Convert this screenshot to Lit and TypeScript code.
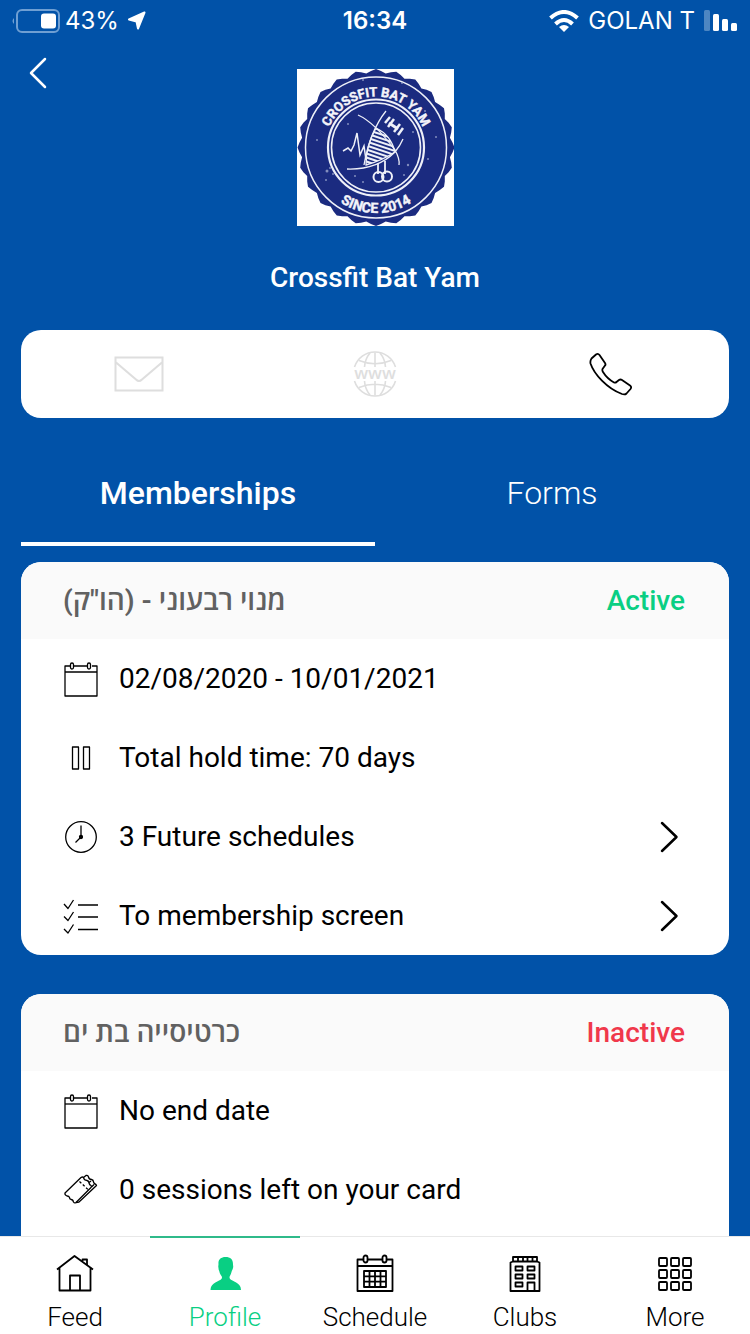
import { LitElement, html, svg, css } from "lit";
import { customElement, property, state } from "lit/decorators.js";
import { classMap } from "lit/directives/class-map.js";

const calendarFrame = svg`
  <path d="M7 5H2V35H34V5H29M11 5H24" />
  <path d="M2 11H34" />
  <rect x="7.5" y="2" width="3" height="6" rx="1.5" />
  <rect x="24.5" y="2" width="3" height="6" rx="1.5" />`;

const icons: Record<string, unknown> = {
  calendar: calendarFrame,
  pause: svg`
    <rect x="9.5" y="7" width="6" height="22" />
    <rect x="20.5" y="7" width="6" height="22" />`,
  clock: svg`
    <circle cx="18" cy="18" r="15.3" />
    <path d="M18 6.500V18L12.500 23.500" />
    <circle cx="18" cy="18" r="1.500" fill="currentColor" />`,
  checklist: svg`
    <path d="M1 6L5 10.500L10.500 2M1 18.500L5 22.500L10.500 14M1 31L5 35L10.500 26.500" />
    <path d="M15 7H35M15 19H35M15 31.500H35" />`,
  ticket: svg`
    <path d="M2 21L18 5.500Q19.500 4.500 20.500 5.500Q21 8.500 24 8.500Q26 9 26 11Q26.500 13 28 13.500Q29 14.500 28 15.500L13 30.500Q11.500 31.500 10.500 30Q10 27.500 8 27.500Q6.500 27 6.500 25.500Q6 24 4 24Q1.500 23 2 21Z" />
    <path d="M20.500 5.500L23 3.500Q25 3 25.500 5Q26 7.500 28.500 7.500Q30.500 8 30.500 10Q31 12 33 12.500L33.500 13.500L16 30L13 30.500" />
    <path d="M26 10.500L28 9M28.500 15L31 12.500" />
    <path d="M16.500 9.500L25 17.500" stroke-dasharray="2.500 2" />`,
  home: svg`
    <path d="M1 15.500L18.500 2L37 15.500M3.500 14V36.500H34.500V14" />
    <path d="M14 36.500V21.500H24V36.500" />
    <path d="M26.500 7V5.500H31V11" />`,
  person: svg`
    <path fill="currentColor" stroke="none" d="M19.500 3C24.500 3 27 5.500 27 10C27 12 27.500 12 27 14C26.500 16 26 16 25.500 18C25 21 23.500 21.500 23.500 23.500C23.500 27 32.500 27.500 34.500 33Q35 35.500 35 36H4.500Q4.500 35 5 33C7 27.500 16 27 16 23.500C16 21.500 14 21 13.500 18C13 16 12.500 16 12.500 14C12 12 12.500 12 12.500 10C12 5.500 15 3 19.500 3Z" />`,
  schedule: svg`
    <path d="M7 5.500H1.500V37H36.500V5.500H31M12 5.500H26M1.500 12H36.500" />
    <rect x="7.500" y="1.500" width="4" height="7" rx="2" />
    <rect x="26.500" y="1.500" width="4" height="7" rx="2" />
    <path d="M8 17H30V33H8ZM8 22.300H30M8 27.700H30M13.500 17V33M19 17V33M24.500 17V33" />`,
  building: svg`
    <path d="M4.500 37V8.500L7 7.500V3H31V7.500L33.500 8.500V37ZM7 7.500H31M12 3V7.500M17 3V7.500M21.500 3V7.500M26.500 3V7.500" />
    <path d="M9.500 12.500H16.500V16.500H9.500ZM21.500 12.500H28.500V16.500H21.500ZM9.500 20.500H16.500V24.500H9.500ZM21.500 20.500H28.500V24.500H21.500ZM9.500 28.500H16.500V32.500H9.500ZM21.500 37V28.500H28.500V37" />`,
  grid: svg`${[4, 16, 28].map((y) =>
    [3, 15, 27].map((x) => svg`<rect x=${x} y=${y} width="8" height="8" rx="1" />`),
  )}`,
};

/* Toothed outline of the round club badge. */
const badgeOutline = Array.from({ length: 96 }, (_, i) => {
  const angle = (i / 96) * Math.PI * 2;
  const radius = 76 + 2.5 * Math.abs(Math.cos(angle * 12)) - 1.5 * Math.abs(Math.sin(angle * 12));
  return `${(79 + radius * Math.sin(angle)).toFixed(1)},${(78.5 - radius * Math.cos(angle)).toFixed(1)}`;
}).join(" ");

@customElement("line-icon")
class LineIcon extends LitElement {
  @property() name = "";
  @property({ type: Number }) box = 36;

  static styles = css`
    :host { display: block; flex: none; }
    svg { display: block; }
  `;

  render() {
    return html`<svg width=${this.box} height=${this.box} viewBox="0 0 ${this.box} ${this.box}"
      fill="none" stroke="currentColor" stroke-width=${this.box > 36 ? 1.8 : 1.3}
      stroke-linejoin="round" aria-hidden="true">${icons[this.name]}</svg>`;
  }
}

@customElement("status-bar")
class StatusBar extends LitElement {
  static styles = css`
    :host {
      display: grid;
      grid-template-columns: 1fr auto 1fr;
      align-items: center;
      height: 40px;
      padding: 0 12px;
      color: #fff;
      font: 400 24px/42px Inter, "Liberation Sans", sans-serif;
    }
    .side { display: flex; align-items: center; gap: 5px; }
    .right { justify-content: flex-end; gap: 9px; }
    .arrow { margin-left: 3px; }
    .time { font-weight: 600; }
    svg { display: block; }
  `;

  render() {
    return html`
      <div class="side">
        <svg width="48" height="24" viewBox="0 0 48 24" aria-label="Battery">
          <path d="M2 9Q-1 12 2 15Z" fill="#6f9fd3" />
          <rect x="5" y="1" width="42" height="22" rx="5" fill="none" stroke="#6f9fd3" stroke-width="2" />
          <rect x="29" y="4.500" width="15" height="15" rx="3" fill="#fff" />
        </svg>
        <span>43%</span>
        <svg class="arrow" width="20" height="20" viewBox="0 0 20 20" aria-hidden="true">
          <path d="M17.500 1.500L2 8.500L9.500 10.500L11 17.500Z" fill="#fff" stroke="#fff" stroke-width="2" stroke-linejoin="round" />
        </svg>
      </div>
      <span class="time">16:34</span>
      <div class="side right">
        <svg width="30" height="22" viewBox="0 0 30 22" fill="none" stroke="#fff" stroke-width="4" aria-hidden="true">
          <path d="M1.500 8Q15 -4 28.500 8M6.500 14Q15 6 23.500 14" />
          <path d="M15 22L10 17Q15 13 20 17Z" fill="#fff" stroke="none" />
        </svg>
        <span>GOLAN T</span>
        <svg width="34" height="22" viewBox="0 0 34 22" fill="#fff" aria-hidden="true">
          <rect x="0" y="0" width="6" height="21" rx="1.500" opacity=".3" />
          <rect x="9" y="4" width="6" height="17" rx="1.500" />
          <rect x="18" y="9" width="6" height="12" rx="1.500" />
          <rect x="27" y="13" width="6" height="8" rx="1.500" />
        </svg>
      </div>`;
  }
}

@customElement("club-logo")
class ClubLogo extends LitElement {
  static styles = css`
    :host { display: block; }
    svg { display: block; }
    .lettering { font: 700 13px Roboto, sans-serif; fill: #f3f4fa; stroke: #f3f4fa; stroke-width: 0.4px; }
    .year { font-size: 14px; }
  `;

  render() {
    return html`
      <svg width="157" height="157" viewBox="0 0 157 157" role="img" aria-label="Crossfit Bat Yam">
        <defs>
          <path id="top" d="M28 78.500A51 51 0 0 1 130 78.500" />
          <path id="bottom" d="M13.500 78.500A65.500 65.500 0 0 0 144.500 78.500" />
          <clipPath id="torso"><path d="M79 59Q94 66 98 83Q84 92 69 96Q69 76 79 59Z" /></clipPath>
        </defs>
        <rect width="157" height="157" fill="#fff" />
        <polygon points=${badgeOutline} fill="#1b2b80" />
        <g fill="none" stroke="#eef0f8">
          <circle cx="79" cy="78.500" r="70.500" stroke-width="1.500" />
          <circle cx="79" cy="78.500" r="48" stroke-width="2.200" />
          <circle cx="79" cy="78.500" r="44.500" stroke-width="1.600" />
          <path d="M46 82L51 79L54 82L57 76L60 64L63 86L67 77L69 91" stroke-width="1.500" />
          <path d="M61 46Q77 53 98 81Q103 90 102 96M89 42Q73 62 67 96M50 100Q80 101 98 83Q103 77 106 70" stroke-width="1.300" />
          <path d="M81 94V105M88 92V105" stroke-width="1.800" />
          <circle cx="81.500" cy="108" r="5" stroke-width="2" />
          <circle cx="90" cy="107.500" r="5" stroke-width="2" />
          <g clip-path="url(#torso)" stroke-width="2">
            ${[0, 1, 2, 3, 4, 5, 6, 7, 8, 9, 10, 11].map(
              (i) => svg`<path d="M62 ${50 + i * 4}L104 ${64 + i * 4}" />`,
            )}
          </g>
          <path d="M79 59Q94 66 98 83Q84 92 69 96Q69 76 79 59Z" stroke-width="1.300" />
          <path d="M92 54L101 60" stroke-width="3" />
          <path d="M88 54L93 48M91 58L97 50M97 63L103 55M101 66L106 59" stroke-width="2.500" />
        </g>
        <g fill="#aeb7d8" opacity=".7">
          <circle cx="30" cy="102" r="1.500" /><circle cx="33" cy="99" r="1" />
          <circle cx="36" cy="105" r="1" /><circle cx="29" cy="111" r="1" />
          <circle cx="111" cy="96" r="1.200" /><circle cx="107" cy="106" r="1" />
          <circle cx="58" cy="107" r="1" /><circle cx="116" cy="63" r="1" />
          <circle cx="128" cy="42" r="1" /><circle cx="131" cy="90" r="1" />
          <circle cx="20" cy="71" r="1" /><circle cx="51" cy="55" r="1" />
          <circle cx="66" cy="113" r="1" /><circle cx="139" cy="68" r="1" />
          <circle cx="66" cy="11" r="1" /><circle cx="105" cy="14" r="1" />
        </g>
        <text class="lettering" text-anchor="middle">
          <textPath href="#top" startOffset="50%">CROSSFIT BAT YAM</textPath>
        </text>
        <text class="lettering year" text-anchor="middle">
          <textPath href="#bottom" startOffset="50%">SINCE 2014</textPath>
        </text>
      </svg>`;
  }
}

interface Row { icon: string; text: string; link?: boolean }
interface Membership { name: string; status: string; active: boolean; rows: Row[] }

@customElement("membership-card")
class MembershipCard extends LitElement {
  @property({ attribute: false }) data!: Membership;

  static styles = css`
    :host { display: block; background: #fff; border-radius: 20px; overflow: hidden; }
    .head {
      display: flex;
      align-items: center;
      justify-content: space-between;
      height: 77px;
      padding: 0 44px 0 42px;
      background: #fafafa;
    }
    .name {
      margin: 0;
      color: #616161;
      font: 600 28px/36px Roboto, "Open Sans", "Liberation Sans", sans-serif;
    }
    .status { color: #f0384b; font-weight: 500; }
    .active { color: #09cf83; }
    .rows { margin: 0; padding: 0; list-style: none; }
    .row {
      box-sizing: border-box;
      display: flex;
      align-items: center;
      gap: 20px;
      width: 100%;
      height: 79px;
      padding: 0 44px 0 42px;
      border: 0;
      background: none;
      color: #000;
      font: inherit;
      text-align: left;
    }
    .text { flex: 1; }
    .chevron { display: block; }
  `;

  render() {
    const { name, status, active, rows } = this.data;
    return html`
      <div class="head">
        <h2 class="name" dir="rtl" lang="he">${name}</h2>
        <span class=${classMap({ status: true, active })}>${status}</span>
      </div>
      <ul class="rows">
        ${rows.map((row) => {
          const body = html`<line-icon name=${row.icon}></line-icon><span class="text">${row.text}</span>`;
          return html`<li>${row.link
            ? html`<button class="row" type="button">${body}
                <svg class="chevron" width="32" height="32" viewBox="0 0 32 32" fill="none" stroke="#000"
                  stroke-width="2.500" stroke-linecap="round" stroke-linejoin="round" aria-hidden="true">
                  <path d="M9 2L23.500 16L9 30" />
                </svg></button>`
            : html`<div class="row">${body}</div>`}</li>`;
        })}
      </ul>`;
  }
}

@customElement("app-root")
class AppRoot extends LitElement {
  @state() private tab = "Memberships";

  private memberships: Membership[] = [
    {
      name: 'מנוי רבעוני - (הו"ק)',
      status: "Active",
      active: true,
      rows: [
        { icon: "calendar", text: "02/08/2020 - 10/01/2021" },
        { icon: "pause", text: "Total hold time: 70 days" },
        { icon: "clock", text: "3 Future schedules", link: true },
        { icon: "checklist", text: "To membership screen", link: true },
      ],
    },
    {
      name: "כרטיסייה בת ים",
      status: "Inactive",
      active: false,
      rows: [
        { icon: "calendar", text: "No end date" },
        { icon: "ticket", text: "0 sessions left on your card" },
      ],
    },
  ];

  private pages = [
    { icon: "home", label: "Feed" },
    { icon: "person", label: "Profile" },
    { icon: "schedule", label: "Schedule" },
    { icon: "building", label: "Clubs" },
    { icon: "grid", label: "More" },
  ];

  static styles = css`
    :host {
      display: flex;
      flex-direction: column;
      height: 100vh;
      overflow: hidden;
      background: #0152a8;
      font: 400 28px/36px Roboto, "Liberation Sans", sans-serif;
    }
    svg { display: block; }
    button { border: 0; background: none; font: inherit; }
    .main { flex: 1; min-height: 0; overflow: hidden; padding: 0 21px; }
    .top { display: grid; grid-template-columns: 1fr auto 1fr; align-items: start; padding-top: 17px; }
    .back { justify-self: start; padding: 0; }
    .logo { margin-top: 12px; }
    .club { margin: 34px 0; color: #fff; font-size: 28px; font-weight: 500; line-height: 36px; text-align: center; }
    .contact {
      display: grid;
      grid-template-columns: repeat(3, 1fr);
      height: 88px;
      background: #fff;
      border-radius: 20px;
    }
    .way { display: grid; place-items: center; padding: 0; color: #dedede; }
    .www { font: 600 17px "Open Sans", sans-serif; fill: currentColor; stroke: none; }
    .ready { color: #000; }
    .tabs { display: grid; grid-template-columns: 1fr 1fr; margin: 22px 0 16px; }
    .tab { height: 106px; padding: 0; color: #fff; font-size: 32px; font-weight: 300; line-height: 40px; }
    .chosen { font-weight: 500; box-shadow: inset 0 -4px #fff; }
    .cards { display: grid; gap: 39px; }
    .card:last-child { padding-bottom: 40px; }
    .nav {
      display: grid;
      grid-template-columns: repeat(5, 1fr);
      flex: none;
      background: #fff;
      box-shadow: inset 0 1px #e8e8e8;
    }
    .page {
      display: flex;
      flex-direction: column;
      align-items: center;
      gap: 8px;
      height: 80px;
      padding-top: 18px;
      color: #000;
      font-size: 26px;
      font-weight: 300;
      line-height: 34px;
      text-decoration: none;
    }
    .current { color: #09cf83; box-shadow: inset 0 2px #2fba8a; }
  `;

  render() {
    return html`
      <status-bar></status-bar>
      <main class="main">
        <header class="top">
          <button class="back" type="button" aria-label="Back">
            <svg width="32" height="32" viewBox="0 0 32 32" fill="none" stroke="#fff" stroke-width="2.500"
              stroke-linecap="round" stroke-linejoin="round">
              <path d="M24 2L10 16L24 30" />
            </svg>
          </button>
          <club-logo class="logo"></club-logo>
        </header>
        <h1 class="club">Crossfit Bat Yam</h1>
        <div class="contact">
          <button class="way" type="button" aria-label="Email">
            <svg width="50" height="36" viewBox="0 0 50 36" fill="none" stroke="currentColor" stroke-width="2">
              <path d="M1.500 1.500H48.500V34.500H1.500ZM1.500 6L22 23.500Q25 26.500 28 23.500L48.500 6" />
            </svg>
          </button>
          <button class="way" type="button" aria-label="Website">
            <svg width="44" height="46" viewBox="0 0 44 46" fill="none" stroke="currentColor" stroke-width="1.600">
              <path d="M1.500 16A21.500 21.500 0 0 1 42.500 16M1.500 30A21.500 21.500 0 0 0 42.500 30" />
              <path d="M22 1.500V16M22 30V44.500M6 9.500Q22 16 38 9.500M6 36.500Q22 30 38 36.500" />
              <path d="M17 2Q12 8 11.500 16M27 2Q32 8 32.500 16M17 44Q12 38 11.500 30M27 44Q32 38 32.500 30" />
              <text class="www" x="22" y="28" text-anchor="middle">www</text>
            </svg>
          </button>
          <button class="way ready" type="button" aria-label="Call">
            <svg width="44" height="44" viewBox="0 0 44 44" fill="none" stroke="currentColor" stroke-width="1.800"
              stroke-linejoin="round">
              <path d="M7 2.500Q9 1 10.500 3L16 11Q17 12.500 16 13.500L13.500 17Q13 18.500 14 20Q18 26.500 25 30.500Q26.500 31 27.500 30L30 28Q31.500 27 33 28L41 33.500Q43 35 41.500 37L37.500 41.500Q36 43 33 42C18 36.500 5 22 1.500 11.500Q1 8.500 2.500 6.500Z" />
            </svg>
          </button>
        </div>
        <div class="tabs" role="tablist">
          ${["Memberships", "Forms"].map(
            (name) => html`<button type="button" role="tab" aria-selected=${this.tab === name}
              class=${classMap({ tab: true, chosen: this.tab === name })}
              @click=${() => (this.tab = name)}>${name}</button>`,
          )}
        </div>
        <section class="cards">
          ${this.memberships.map((m) => html`<membership-card class="card" .data=${m}></membership-card>`)}
        </section>
      </main>
      <nav class="nav">
        ${this.pages.map(
          (page) => html`<a href="#${page.label}" class=${classMap({ page: true, current: page.label === "Profile" })}>
            <line-icon name=${page.icon} .box=${38}></line-icon>${page.label}
          </a>`,
        )}
      </nav>`;
  }
}
